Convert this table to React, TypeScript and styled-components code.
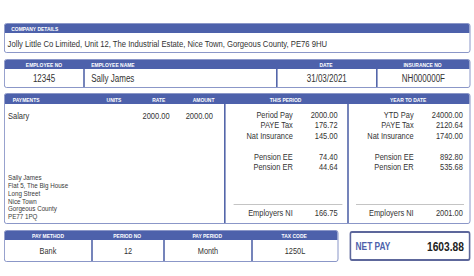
import React from "react";
import styled, { createGlobalStyle } from "styled-components";

const GlobalStyle = createGlobalStyle`
  html, body { margin: 0; padding: 0; background: #ffffff; overflow: hidden; }
  body { font-family: "Liberation Sans", Arial, sans-serif; color: #333333; }
`;

const BLUE = "#4d61ab";
const EDGE = "#7e8bc2";
const DIVIDER = "#5466aa";

/* The source payslip is drawn horizontally condensed; the sheet is laid out
   at its natural width and narrowed as a whole. */
const Sheet = styled.div`
  width: 587.5px;
  box-sizing: border-box;
  padding: 23px 0 0 5px;
  transform: scaleX(0.8);
  transform-origin: 0 0;
  display: flex;
  flex-direction: column;
`;

const Panel = styled.section<{ $mt?: number }>`
  margin-top: ${(p) => p.$mt ?? 0}px;
  border: 1px solid ${EDGE};
  border-radius: 3px;
  overflow: hidden;
  background: #fff;
`;

const HeaderBar = styled.div<{ $cols: string; $h: number }>`
  display: grid;
  grid-template-columns: ${(p) => p.$cols};
  height: ${(p) => p.$h}px;
  background: ${BLUE};
`;

const HeadLabel = styled.div<{ $align?: string; $pl?: number }>`
  font-size: 6.2px;
  font-weight: 700;
  color: #ffffff;
  text-transform: uppercase;
  text-align: ${(p) => p.$align ?? "center"};
  padding-left: ${(p) => p.$pl ?? 0}px;
  display: flex;
  align-items: center;
  justify-content: ${(p) =>
    p.$align === "left" ? "flex-start" : "center"};
  white-space: nowrap;
`;

const CompanyText = styled.div`
  height: 19px;
  font-size: 9.6px;
  padding: 2px 0 0 3.5px;
  box-sizing: border-box;
  display: flex;
  align-items: center;
  white-space: nowrap;
`;

const CellRow = styled.div<{ $cols: string; $h: number }>`
  display: grid;
  grid-template-columns: ${(p) => p.$cols};
  height: ${(p) => p.$h}px;
`;

const Cell = styled.div<{ $align?: string; $pl?: number; $fs?: number; $first?: boolean }>`
  display: flex;
  align-items: center;
  justify-content: ${(p) => (p.$align === "left" ? "flex-start" : "center")};
  padding-left: ${(p) => p.$pl ?? 0}px;
  font-size: ${(p) => p.$fs ?? 10}px;
  border-left: ${(p) => (p.$first ? "none" : `2px solid ${DIVIDER}`)};
  white-space: nowrap;
`;

const PayBody = styled.div`
  display: grid;
  grid-template-columns: 274px 154px 1fr;
  height: 119px;
`;

const PayColumn = styled.div<{ $first?: boolean }>`
  display: flex;
  flex-direction: column;
  border-left: ${(p) => (p.$first ? "none" : `2px solid ${DIVIDER}`)};
  min-width: 0;
`;

const PayLine = styled.div`
  display: grid;
  grid-template-columns: 111px 51px 61px 50px;
  margin-top: 6px;
  height: 11px;
  font-size: 9.4px;
  line-height: 11px;
`;

const PayText = styled.div<{ $align?: string; $pr?: number; $pl?: number }>`
  text-align: ${(p) => p.$align ?? "left"};
  padding-right: ${(p) => p.$pr ?? 0}px;
  padding-left: ${(p) => p.$pl ?? 0}px;
  white-space: nowrap;
`;

const Address = styled.div`
  margin-top: auto;
  padding: 0 0 2px 4px;
  display: flex;
  flex-direction: column;
  font-size: 7.8px;
  line-height: 7.8px;
  color: #3a3a3a;
`;

const AddressLine = styled.span`
  height: 7.8px;
  white-space: nowrap;
`;

const Figures = styled.div`
  padding-top: 5.5px;
  display: flex;
  flex-direction: column;
`;

const FigureGroup = styled.div<{ $gap?: number }>`
  margin-top: ${(p) => p.$gap ?? 0}px;
  display: flex;
  flex-direction: column;
`;

const FigureRow = styled.div<{ $label: number; $pr: number }>`
  display: grid;
  grid-template-columns: ${(p) => p.$label}px 1fr;
  height: 10.5px;
  line-height: 10.5px;
  font-size: 9.3px;
  padding-right: ${(p) => p.$pr}px;
  & > span { text-align: right; white-space: nowrap; }
`;

const Rule = styled.hr<{ $l: number; $r: number }>`
  margin: auto ${(p) => p.$r}px 3.5px ${(p) => p.$l}px;
  border: none;
  border-top: 1px solid #c4c4c4;
  height: 0;
  width: auto;
`;

const FigureFoot = styled.div`
  padding-bottom: 4.5px;
`;

const BottomRow = styled.div`
  margin-top: 6px;
  display: flex;
  gap: 14px;
  align-items: center;
`;

const BottomPanel = styled(Panel)`
  flex: 1;
`;

const NetPay = styled.div`
  width: 151px;
  height: 30px;
  box-sizing: border-box;
  border: 2px solid #5d679b;
  border-radius: 3px;
  display: flex;
  align-items: center;
  justify-content: space-between;
  padding: 0 5.5px 0 6px;
`;

const NetLabel = styled.span`
  font-size: 10.4px;
  font-weight: 700;
  color: ${BLUE};
`;

const NetAmount = styled.span`
  font-size: 12.8px;
  font-weight: 700;
  color: #222;
`;

type Fig = [string, string];

function FigureBlock({
  top,
  mid,
  foot,
  label,
  pr,
  rule,
}: {
  top: Fig[];
  mid: Fig[];
  foot: Fig;
  label: number;
  pr: number;
  rule: [number, number];
}) {
  return (
    <>
      <Figures>
        <FigureGroup>
          {top.map(([l, v]) => (
            <FigureRow key={l} $label={label} $pr={pr}>
              <span>{l}</span>
              <span>{v}</span>
            </FigureRow>
          ))}
        </FigureGroup>
        <FigureGroup $gap={10.5}>
          {mid.map(([l, v]) => (
            <FigureRow key={l} $label={label} $pr={pr}>
              <span>{l}</span>
              <span>{v}</span>
            </FigureRow>
          ))}
        </FigureGroup>
      </Figures>
      <Rule $l={rule[0]} $r={rule[1]} />
      <FigureFoot>
        <FigureRow $label={label} $pr={pr}>
          <span>{foot[0]}</span>
          <span>{foot[1]}</span>
        </FigureRow>
      </FigureFoot>
    </>
  );
}

const EMP_COLS = "98px 241px 125px 1fr";
const PAY_HEAD_COLS = "111px 51px 61px 51px 154px 1fr";
const BOTTOM_COLS = "108px 90px 110px 1fr";

const ADDRESS = [
  "Sally James",
  "Flat 5, The Big House",
  "Long Street",
  "Nice Town",
  "Gorgeous County",
  "PE77 1PQ",
];

export default function App() {
  return (
    <>
      <GlobalStyle />
      <Sheet>
        <Panel>
          <HeaderBar $cols="1fr" $h={9}>
            <HeadLabel $align="left" $pl={8}>Company Details</HeadLabel>
          </HeaderBar>
          <CompanyText>
            Jolly Little Co Limited, Unit 12, The Industrial Estate, Nice Town, Gorgeous County, PE76 9HU
          </CompanyText>
        </Panel>

        <Panel $mt={6}>
          <HeaderBar $cols={EMP_COLS} $h={9}>
            <HeadLabel>Employee No</HeadLabel>
            <HeadLabel $align="left" $pl={10}>Employee Name</HeadLabel>
            <HeadLabel>Date</HeadLabel>
            <HeadLabel>Insurance No</HeadLabel>
          </HeaderBar>
          <CellRow $cols={EMP_COLS} $h={18}>
            <Cell $first>12345</Cell>
            <Cell $align="left" $pl={8}>Sally James</Cell>
            <Cell>31/03/2021</Cell>
            <Cell>NH000000F</Cell>
          </CellRow>
        </Panel>

        <Panel $mt={5}>
          <HeaderBar $cols={PAY_HEAD_COLS} $h={10}>
            <HeadLabel $align="left" $pl={10}>Payments</HeadLabel>
            <HeadLabel>Units</HeadLabel>
            <HeadLabel>Rate</HeadLabel>
            <HeadLabel>Amount</HeadLabel>
            <HeadLabel>This Period</HeadLabel>
            <HeadLabel>Year To Date</HeadLabel>
          </HeaderBar>
          <PayBody>
            <PayColumn $first>
              <PayLine>
                <PayText $pl={4}>Salary</PayText>
                <PayText />
                <PayText $align="right" $pr={17}>2000.00</PayText>
                <PayText $align="right" $pr={13}>2000.00</PayText>
              </PayLine>
              <Address>
                {ADDRESS.map((line) => (
                  <AddressLine key={line}>{line}</AddressLine>
                ))}
              </Address>
            </PayColumn>
            <PayColumn>
              <FigureBlock
                top={[
                  ["Period Pay", "2000.00"],
                  ["PAYE Tax", "176.72"],
                  ["Nat Insurance", "145.00"],
                ]}
                mid={[
                  ["Pension EE", "74.40"],
                  ["Pension ER", "44.64"],
                ]}
                foot={["Employers NI", "166.75"]}
                label={84}
                pr={12}
                rule={[10, 6]}
              />
            </PayColumn>
            <PayColumn>
              <FigureBlock
                top={[
                  ["YTD Pay", "24000.00"],
                  ["PAYE Tax", "2120.64"],
                  ["Nat Insurance", "1740.00"],
                ]}
                mid={[
                  ["Pension EE", "892.80"],
                  ["Pension ER", "535.68"],
                ]}
                foot={["Employers NI", "2001.00"]}
                label={81}
                pr={8}
                rule={[9, 7]}
              />
            </PayColumn>
          </PayBody>
        </Panel>

        <BottomRow>
          <BottomPanel>
            <HeaderBar $cols={BOTTOM_COLS} $h={9}>
              <HeadLabel>Pay Method</HeadLabel>
              <HeadLabel>Period No</HeadLabel>
              <HeadLabel>Pay Period</HeadLabel>
              <HeadLabel>Tax Code</HeadLabel>
            </HeaderBar>
            <CellRow $cols={BOTTOM_COLS} $h={21}>
              <Cell $first $fs={9.2}>Bank</Cell>
              <Cell $fs={9.2}>12</Cell>
              <Cell $fs={9.2}>Month</Cell>
              <Cell $fs={9.2}>1250L</Cell>
            </CellRow>
          </BottomPanel>
          <NetPay>
            <NetLabel>NET PAY</NetLabel>
            <NetAmount>1603.88</NetAmount>
          </NetPay>
        </BottomRow>
      </Sheet>
    </>
  );
}
